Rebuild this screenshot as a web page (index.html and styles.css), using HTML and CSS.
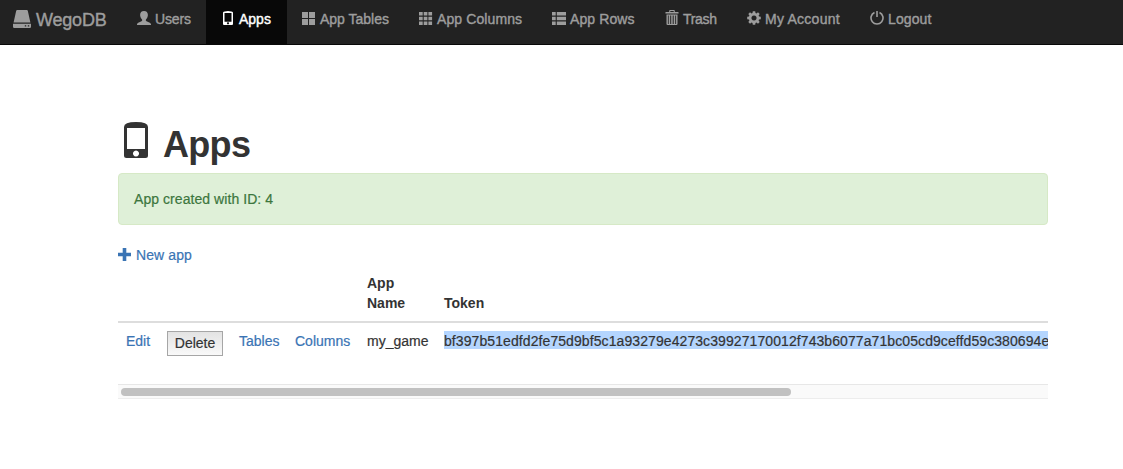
FILE: index.html
```html
<!DOCTYPE html>
<html lang="en">
<head>
<meta charset="utf-8">
<title>WegoDB</title>
<link rel="stylesheet" href="styles.css">
</head>
<body>
<nav class="navbar">
  <a class="brand"><svg class="brand-icon" viewBox="0 0 18 18"><path d="M4.200 0h9.600q.8 0 1 .8L17.400 12.600H.6L3.200.8Q3.400 0 4.200 0zM0 13.800h18v3q0 1.200-1.200 1.200H1.200Q0 18 0 16.800zM11.800 15.200v1.400h1.400v-1.400zm3 0v1.400h1.400v-1.400z" fill-rule="evenodd"/></svg><span class="t-brand">WegoDB</span></a>
  <a class="item w-users"><svg class="icon" viewBox="0 0 14 14"><path d="M7 0C4.500 0 3 1.600 3.100 4.100c.1 1.900.8 3.300 1.900 4.400.4.700.2 1.300-.5 1.700L1.200 11.700Q.1 12.300 0 13.200v.8h14v-.8q-.1-.9-1.200-1.500L9.500 10.200c-.7-.4-.9-1-.5-1.700 1.100-1.100 1.800-2.500 1.900-4.400C11 1.600 9.500 0 7 0z"/></svg><span class="t-users">Users</span></a>
  <a class="item active w-apps"><svg class="icon" viewBox="0 0 14 14"><path fill-rule="evenodd" d="M2 1.500Q3 0 7 0t5 1.500V13q0 1-1 1H3q-1 0-1-1zM3.500 2v8.700h7V2zM7 11.300a1 1 0 1 0 .01 0z"/></svg><span class="t-apps">Apps</span></a>
  <a class="item w-tables"><svg class="icon" viewBox="0 0 14 14"><path d="M0 1h6v6H0zM7 1h6v6H7zM0 8h6v6H0zM7 8h6v6H7z"/></svg><span class="t-tables">App Tables</span></a>
  <a class="item w-columns"><svg class="icon" viewBox="0 0 14 14"><path d="M0 1h3.700v3.500H0zM4.700 1h3.700v3.500H4.700zM9.400 1h3.700v3.500H9.400zM0 5.700h3.700v3.500H0zM4.700 5.700h3.700v3.500H4.700zM9.400 5.700h3.700v3.500H9.400zM0 10.400h3.700v3.500H0zM4.700 10.400h3.700v3.500H4.700zM9.400 10.400h3.700v3.500H9.400z"/></svg><span class="t-columns">App Columns</span></a>
  <a class="item w-rows"><svg class="icon" viewBox="0 0 14 14"><path d="M0 1h3.700v3.500H0zM4.800 1H14v3.500H4.800zM0 5.700h3.700v3.500H0zM4.800 5.700H14v3.500H4.800zM0 10.400h3.700v3.500H0zM4.800 10.400H14v3.500H4.800z"/></svg><span class="t-rows">App Rows</span></a>
  <a class="item w-trash"><svg class="icon tall" viewBox="0 0 14 15"><path fill-rule="evenodd" d="M4.200 2V.9Q4.200 0 5 0h4q.8 0 .8.900V2H13q.6 0 .6.600v1H.4v-1Q.4 2 1 2zM5.300 2h3.400V1H5.300zM1.500 4.600h11V14q0 1-1 1h-9q-1 0-1-1zm1.400 1v8.400h.8V5.600zm2.300 0v8.400h1V5.600zm2.500 0v8.400h1V5.600zm2.500 0v8.400h.9V5.600z"/></svg><span class="t-trash">Trash</span></a>
  <a class="item w-account"><svg class="icon" viewBox="0 0 14 14"><path fill-rule="evenodd" d="M5.800.2h2.400l.3 1.800 1 .4 1.500-1.100 1.700 1.700-1.100 1.500.4 1 1.800.3v2.400l-1.800.3-.4 1 1.100 1.500-1.700 1.700-1.500-1.100-1 .4-.3 1.800H5.800L5.500 12l-1-.4L3 12.700 1.300 11l1.100-1.500-.4-1-1.800-.3V5.800L2 5.500l.4-1L1.300 3 3 1.300l1.500 1.100 1-.4zM7 4.400a2.600 2.600 0 1 0 .01 0z"/></svg><span class="t-account">My Account</span></a>
  <a class="item w-logout"><svg class="icon" viewBox="0 0 14 14"><path d="M4.500 1.500a6 6 0 1 0 5 0" fill="none" stroke="currentColor" stroke-width="1.600"/><path d="M6.200 0h1.600v6H6.200z"/></svg><span class="t-logout">Logout</span></a>
</nav>
<main class="container">
  <h1 class="title"><svg class="title-icon" viewBox="0 0 24 36"><path fill-rule="evenodd" d="M0 5Q0 0 12 0t12 5v28.500q0 2.500-2.500 2.500h-19Q0 36 0 33.500zM3 6v21h18V6zM12 28.400a3 3 0 1 0 .01 0z"/></svg><span class="t-title">Apps</span></h1>
  <div class="alert"><span class="t-alert">App created with ID: 4</span></div>
  <a class="new-app"><svg class="plus" viewBox="0 0 13 13"><path d="M4.700 0h3.600v4.700H13v3.600H8.300V13H4.700V8.300H0V4.700h4.700z"/></svg><span class="t-new">New app</span></a>
  <div class="table-wrap">
    <table class="table">
      <colgroup><col class="c-edit"><col class="c-delete"><col class="c-tables"><col class="c-columns"><col class="c-name"><col class="c-token"></colgroup>
      <thead><tr><th></th><th></th><th></th><th></th><th>App<br>Name</th><th>Token</th></tr></thead>
      <tbody><tr>
        <td><a class="link">Edit</a></td>
        <td><button class="delete">Delete</button></td>
        <td><a class="link">Tables</a></td>
        <td><a class="link">Columns</a></td>
        <td>my_game</td>
        <td><span class="token">bf397b51edfd2fe75d9bf5c1a93279e4273c39927170012f743b6077a71bc05cd9ceffd59c380694e</span></td>
      </tr></tbody>
    </table>
    <div class="scrollbar"><div class="thumb"></div></div>
  </div>
</main>
</body>
</html>
```
FILE: styles.css
```css
* { box-sizing: border-box; }
body { margin: 0; background: #fff; color: #333; font: 14px/20px "Liberation Sans", Arial, sans-serif; -webkit-text-stroke: 0.2px; }
svg { fill: currentColor; display: block; flex: none; }
.navbar { display: flex; height: 45px; background: #222; border-bottom: 1px solid #080808; color: #9d9d9d; -webkit-text-stroke: 0.4px; }
.brand { display: flex; width: 122px; padding: 10px 0 0 13px; gap: 5px; font-size: 18px; letter-spacing: -0.2px; line-height: 21px; }
.brand-icon { width: 18px; height: 18px; }
.item { display: flex; flex: none; gap: 4px; padding: 9px 0 0 15px; white-space: nowrap; }
.icon { width: 14px; height: 14px; margin-top: 2px; }
.tall { height: 15px; margin-top: 1px; }
.active { background: #080808; color: #fff; }
.w-users { width: 84px; }
.w-apps { width: 81px; }
.w-tables { width: 117px; }
.w-columns { width: 133px; }
.w-rows { width: 113px; }
.w-trash { width: 82px; }
.w-account { width: 123px; }
.t-users { letter-spacing: -0.15px; }
.t-columns { letter-spacing: 0.1px; }
.t-rows { letter-spacing: 0.1px; }
.t-trash { letter-spacing: -0.3px; }
.t-account { letter-spacing: 0.25px; }
.t-logout { letter-spacing: 0.1px; }
.container { width: 930px; margin: 77px 0 0 118px; }
.title { display: flex; height: 40px; margin: 0 0 11px; padding-left: 6px; gap: 15px; font-size: 36px; line-height: 46px; font-weight: bold; letter-spacing: -0.7px; -webkit-text-stroke: 0; }
.title-icon { width: 24px; height: 36px; }
.alert { height: 52px; padding: 15px; border: 1px solid #d6e9c6; border-radius: 4px; background: #dff0d8; color: #3c763d; letter-spacing: 0.06px; }
.new-app { display: flex; height: 20px; margin-top: 20px; gap: 5px; color: #3a74b4; letter-spacing: 0.1px; }
.plus { width: 13px; height: 13px; margin-top: 3px; }
.table-wrap { overflow: hidden; }
.table { width: 930px; table-layout: fixed; border-collapse: separate; border-spacing: 0; }
.c-edit { width: 41px; }
.c-delete { width: 72px; }
.c-tables { width: 56px; }
.c-columns { width: 72px; }
.c-name { width: 77px; }
th { height: 58px; padding: 8px; border-bottom: 2px solid #ddd; text-align: left; vertical-align: bottom; -webkit-text-stroke: 0; }
td { height: 61px; padding: 8px; vertical-align: top; white-space: nowrap; }
.link { color: #3a74b4; }
.delete { display: block; width: 56px; height: 25px; padding: 0 0 2px; border: 1px solid #a6a6a6; border-radius: 0; background: linear-gradient(#e3e3e3, #f9f9f9); color: #333; font: inherit; line-height: 20px; }
.token { display: inline-block; height: 18px; line-height: 20px; background: #b4d5fe; vertical-align: top; letter-spacing: 0.085px; }
.scrollbar { height: 15px; padding: 3px; border-top: 1px solid #e7e7e7; border-bottom: 1px solid #ededed; background: #fafafa; }
.thumb { width: 670px; height: 8px; border-radius: 4px; background: #c1c1c1; }
```
